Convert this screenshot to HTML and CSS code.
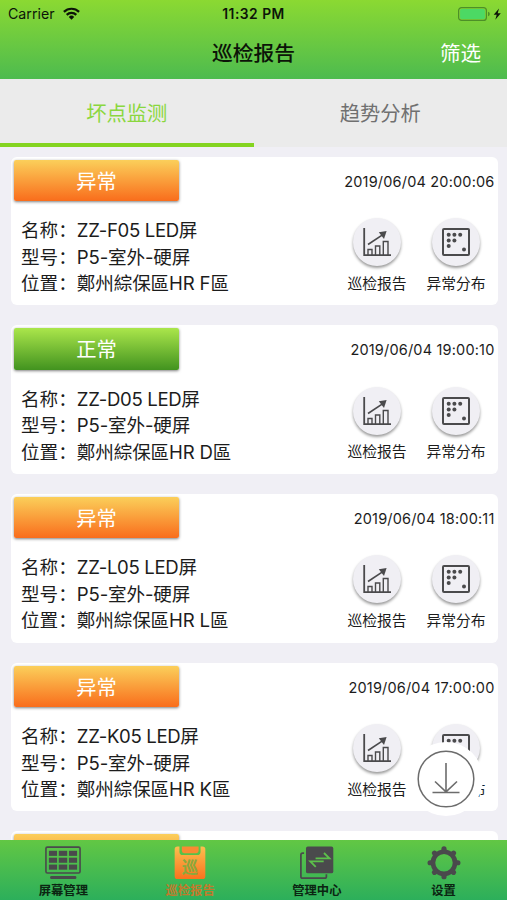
FILE: index.html
```html
<!DOCTYPE html>
<html lang="zh-CN">
<head>
    <meta charset="UTF-8">
    <meta name="viewport" content="width=device-width, initial-scale=1.0">
    <title>巡检报告</title>
    <link rel="stylesheet" href="styles.css">
</head>
<body>
    <!-- shared icons -->
    <svg class="sprite">
        <symbol id="icon-chart" viewBox="0 0 28 28">
            <path d="M1.2 0V27.2H28" fill="none" stroke="#4a4a4c" stroke-width="1.8"/>
            <path d="M5 27V21.5H9V27M12.5 27V18H16.8V27M20.3 27V13.5H25V27" fill="none" stroke="#4a4a4c" stroke-width="1.4"/>
            <path d="M5 16.5L19.500 6.800" fill="none" stroke="#4a4a4c" stroke-width="1.6"/>
            <path d="M15.800 4.300L23.600 3L21 10.900Z" fill="#4a4a4c"/>
        </symbol>
        <symbol id="icon-dots" viewBox="0 0 28 28">
            <rect x="1" y="1" width="26" height="26" rx="1" fill="none" stroke="#4a4a4c" stroke-width="2"/>
            <g fill="#4a4a4c">
                <circle cx="6.700" cy="6.700" r="2"/>
                <circle cx="12.400" cy="6.700" r="2"/>
                <circle cx="18.200" cy="6.700" r="2"/>
                <circle cx="6.700" cy="12.400" r="2"/>
                <circle cx="12.400" cy="12.400" r="2"/>
                <circle cx="6.700" cy="18" r="2"/>
                <circle cx="22" cy="21.600" r="2"/>
            </g>
        </symbol>
    </svg>

    <div class="app">
        <div class="header">
            <div class="status-bar">
                <div class="carrier">
                    <span>Carrier</span>
                    <svg class="wifi" viewBox="0 0 17 13">
                        <g fill="none" stroke="#0c1408" stroke-width="2.2">
                            <path d="M0.900 4.900A10.800 10.800 0 0 1 16.100 4.900"/>
                            <path d="M3.700 7.900A6.800 6.800 0 0 1 13.300 7.900"/>
                        </g>
                        <path d="M5.800 9.900A3.900 3.900 0 0 1 11.200 9.900L8.500 12.700Z" fill="#0c1408"/>
                    </svg>
                </div>
                <div class="time">11:32 PM</div>
                <div class="battery">
                    <svg viewBox="0 0 44 14">
                        <rect x="0.600" y="0.600" width="27.800" height="12.800" rx="3" fill="none" stroke="#4d8f28" stroke-width="1.2"/>
                        <rect x="2.100" y="2.100" width="24.800" height="9.800" rx="1.600" fill="#4cd964"/>
                        <path d="M30 4.800Q31.800 5.300 31.800 7T30 9.200Z" fill="#4d8f28"/>
                        <path d="M41 1.500L35.700 7.800H38.700L37.300 12.800L42.800 6.300H39.700Z" fill="#0c1408"/>
                    </svg>
                </div>
            </div>
            <div class="nav">
                <div class="title">巡检报告</div>
                <div class="filter">筛选</div>
            </div>
        </div>

        <div class="tabs">
            <div class="tab active">坏点监测</div>
            <div class="tab">趋势分析</div>
        </div>

        <div class="list">
            <div class="card">
                <div class="card-top">
                    <div class="badge error">异常</div>
                    <div class="date">2019/06/04 20:00:06</div>
                </div>
                <div class="card-body">
                    <div class="info">
                        <div>名称：<span class="name">ZZ-F05 LED屏</span></div>
                        <div>型号：<span>P5-室外-硬屏</span></div>
                        <div>位置：<span>鄭州綜保區HR F區</span></div>
                    </div>
                    <div class="actions">
                        <div class="action">
                            <div class="round"><svg><use href="#icon-chart"/></svg></div>
                            <div>巡检报告</div>
                        </div>
                        <div class="action">
                            <div class="round"><svg><use href="#icon-dots"/></svg></div>
                            <div>异常分布</div>
                        </div>
                    </div>
                </div>
            </div>

            <div class="card">
                <div class="card-top">
                    <div class="badge normal">正常</div>
                    <div class="date">2019/06/04 19:00:10</div>
                </div>
                <div class="card-body">
                    <div class="info">
                        <div>名称：<span class="name">ZZ-D05 LED屏</span></div>
                        <div>型号：<span>P5-室外-硬屏</span></div>
                        <div>位置：<span>鄭州綜保區HR D區</span></div>
                    </div>
                    <div class="actions">
                        <div class="action">
                            <div class="round"><svg><use href="#icon-chart"/></svg></div>
                            <div>巡检报告</div>
                        </div>
                        <div class="action">
                            <div class="round"><svg><use href="#icon-dots"/></svg></div>
                            <div>异常分布</div>
                        </div>
                    </div>
                </div>
            </div>

            <div class="card">
                <div class="card-top">
                    <div class="badge error">异常</div>
                    <div class="date">2019/06/04 18:00:11</div>
                </div>
                <div class="card-body">
                    <div class="info">
                        <div>名称：<span class="name">ZZ-L05 LED屏</span></div>
                        <div>型号：<span>P5-室外-硬屏</span></div>
                        <div>位置：<span>鄭州綜保區HR L區</span></div>
                    </div>
                    <div class="actions">
                        <div class="action">
                            <div class="round"><svg><use href="#icon-chart"/></svg></div>
                            <div>巡检报告</div>
                        </div>
                        <div class="action">
                            <div class="round"><svg><use href="#icon-dots"/></svg></div>
                            <div>异常分布</div>
                        </div>
                    </div>
                </div>
            </div>

            <div class="card">
                <div class="card-top">
                    <div class="badge error">异常</div>
                    <div class="date">2019/06/04 17:00:00</div>
                </div>
                <div class="card-body">
                    <div class="info">
                        <div>名称：<span class="name">ZZ-K05 LED屏</span></div>
                        <div>型号：<span>P5-室外-硬屏</span></div>
                        <div>位置：<span>鄭州綜保區HR K區</span></div>
                    </div>
                    <div class="actions">
                        <div class="action">
                            <div class="round"><svg><use href="#icon-chart"/></svg></div>
                            <div>巡检报告</div>
                        </div>
                        <div class="action">
                            <div class="round"><svg><use href="#icon-dots"/></svg></div>
                            <div>异常分布</div>
                        </div>
                    </div>
                </div>
            </div>

            <div class="card">
                <div class="card-top">
                    <div class="badge error"></div>
                </div>
            </div>
        </div>

        <div class="download">
            <svg viewBox="0 0 74 74">
                <circle cx="37" cy="37" r="27.800" fill="none" stroke="#6c6c6c" stroke-width="1.5"/>
                <path d="M37 21V49.500M26 39.500L37 49.800L48 39.500M23.500 50.500H50.500" fill="none" stroke="#6c6c6c" stroke-width="1.6"/>
            </svg>
        </div>

        <div class="tab-bar">
            <div class="tab-item">
                <svg viewBox="0 0 38 36">
                    <rect x="1.200" y="1.200" width="35.600" height="27" rx="1.500" fill="none" stroke="#4a4a4c" stroke-width="1.700"/>
                    <g fill="#4a4a4c">
                        <rect x="4.300" y="5" width="8.500" height="5.300"/>
                        <rect x="14.600" y="5" width="8.800" height="5.300"/>
                        <rect x="25.200" y="5" width="8.500" height="5.300"/>
                        <rect x="4.300" y="12.200" width="8.500" height="5.300"/>
                        <rect x="14.600" y="12.200" width="8.800" height="5.300"/>
                        <rect x="25.200" y="12.200" width="8.500" height="5.300"/>
                        <rect x="4.300" y="19.400" width="8.500" height="5.300"/>
                        <rect x="14.600" y="19.400" width="8.800" height="5.300"/>
                        <rect x="25.200" y="19.400" width="8.500" height="5.300"/>
                        <rect x="5.500" y="31.300" width="27.500" height="3.200" rx="1.500"/>
                    </g>
                </svg>
                <span>屏幕管理</span>
            </div>
            <div class="tab-item current">
                <svg viewBox="0 0 38 36">
                    <defs>
                        <linearGradient id="orange" gradientUnits="userSpaceOnUse" x1="0" y1="0" x2="0" y2="36">
                            <stop offset="0" stop-color="#fcc04f"/>
                            <stop offset="1" stop-color="#f96f1d"/>
                        </linearGradient>
                    </defs>
                    <path d="M3.500 0.500H8V6Q8 9.500 11.500 9.500H26.500Q30 9.500 30 6V0.500H32Q35 0.500 35 3.500V31.500Q35 34.500 32 34.500H6Q3 34.500 3 31.500V3.500Q3 0.500 6 0.500Z" fill="url(#orange)"/>
                    <path d="M10.500 0.500H28V5Q28 7.500 25.500 7.500H13Q10.500 7.500 10.500 5Z" fill="#f98a32"/>
                    <text class="icon-text" x="19" y="28" text-anchor="middle">巡</text>
                </svg>
                <span>巡检报告</span>
            </div>
            <div class="tab-item">
                <svg viewBox="0 0 38 36">
                    <path d="M5.500 7.500H4Q2.200 7.500 2.200 9.300V31.800Q2.200 33.600 4 33.600H27Q28.800 33.600 28.800 31.800V29.500" fill="none" stroke="#4a4a4c" stroke-width="1.800"/>
                    <rect x="7.500" y="0.500" width="28.500" height="28" rx="2" fill="#4a4a4c"/>
                    <path d="M17.500 13H32L26.300 7.300M26 16H12L17.700 21.700" fill="none" stroke="#5cc04b" stroke-width="1.900"/>
                </svg>
                <span>管理中心</span>
            </div>
            <div class="tab-item">
                <svg viewBox="0 0 38 36">
                    <circle cx="19" cy="17.500" r="11.500" fill="none" stroke="#4a4a4c" stroke-width="4.800"/>
                    <g fill="none" stroke="#4a4a4c" stroke-width="5.400" stroke-linecap="round">
                        <path d="M19 3V5M19 30V32M4.500 17.500H6.500M31.500 17.500H33.500"/>
                        <path d="M9 7.500L10.300 8.800M27.700 26.200L29 27.500M29 7.500L27.700 8.800M10.300 26.200L9 27.500"/>
                    </g>
                </svg>
                <span>设置</span>
            </div>
        </div>
    </div>
</body>
</html>
```
FILE: styles.css
```css
* {
    box-sizing: border-box;
}
body {
    margin: 0;
    font-family: Inter, "Noto Sans CJK SC", sans-serif;
    color: #1c1c1c;
    background-color: #f0eff5;
    overflow: hidden;
}
svg {
    display: block;
}
.sprite {
    display: none;
}
.app {
    position: relative;
    display: flex;
    flex-direction: column;
    width: 507px;
    height: 900px;
}

/* header */
.header {
    flex: none;
    height: 79px;
    background: linear-gradient(#8bd932, #4dbb4f);
}
.status-bar {
    display: grid;
    grid-template-columns: 1fr auto 1fr;
    align-items: center;
    height: 27px;
    padding: 0 5px 0 8px;
    color: #0c1408;
}
.carrier {
    display: flex;
    align-items: center;
    gap: 8px;
    font-size: 14.200px;
}
.wifi {
    width: 17px;
    height: 13px;
}
.time {
    margin-right: 3px;
    font-size: 13.800px;
    font-weight: 600;
    letter-spacing: 0.500px;
}
.battery {
    justify-self: end;
}
.battery svg {
    width: 44px;
    height: 14px;
}
.nav {
    display: grid;
    grid-template-columns: 1fr auto 1fr;
    align-items: center;
    height: 50px;
    padding-right: 26px;
    padding-left: 26px;
    font-size: 20.500px;
}
.title {
    grid-column: 2;
    font-size: 20.800px;
    font-weight: 500;
    color: #0c1408;
}
.filter {
    justify-self: end;
    color: #fff;
}

/* tabs */
.tabs {
    flex: none;
    display: flex;
    height: 68px;
    background-color: #ebebeb;
}
.tab {
    flex: 1;
    display: flex;
    align-items: center;
    justify-content: center;
    border-bottom: 4px solid transparent;
    padding-top: 2px;
    font-size: 20.300px;
    color: #707070;
}
.tab.active {
    color: #8ad73e;
    border-bottom-color: #84d420;
}

/* cards */
.list {
    flex: 1;
    min-height: 0;
    overflow: hidden;
    display: flex;
    flex-direction: column;
    gap: 20px;
    padding: 9.500px 9.500px 0 10.500px;
}
.card {
    flex: none;
    height: 148.700px;
    padding: 3px 3px 0 3.500px;
    border-radius: 6px;
    background-color: #fff;
}
.card-top {
    display: flex;
    justify-content: space-between;
    align-items: center;
}
.badge {
    width: 165px;
    height: 41.500px;
    line-height: 44px;
    border-radius: 2px;
    box-shadow: 0 1px 3px rgba(0, 0, 0, 0.5);
    font-size: 20.300px;
    text-align: center;
    color: #fff;
}
.error {
    background: linear-gradient(#fbcf5a, #f96d1c);
}
.normal {
    background: linear-gradient(#abe64b, #42931f);
}
.date {
    padding-top: 2px;
    font-size: 14.500px;
    letter-spacing: 0.180px;
}
.card-body {
    display: flex;
    justify-content: space-between;
}
.info {
    padding: 16px 0 0 7px;
    font-size: 18.600px;
    line-height: 26.500px;
    white-space: nowrap;
}
.info span {
    letter-spacing: -0.150px;
}
.info .name {
    letter-spacing: -0.350px;
}
.actions {
    display: flex;
    gap: 19px;
    padding: 17px 8.500px 0 0;
}
.action {
    display: flex;
    flex-direction: column;
    align-items: center;
    gap: 6.500px;
    font-size: 14.800px;
    line-height: 22px;
    width: 60px;
    white-space: nowrap;
}
.round {
    display: flex;
    align-items: center;
    justify-content: center;
    width: 48px;
    height: 48px;
    border-radius: 50%;
    background-color: #f0eff4;
    box-shadow: 0 2px 3px rgba(0, 0, 0, 0.4);
}
.round svg {
    width: 28px;
    height: 28px;
}

/* floating button over the list */
.download {
    position: absolute;
    right: 24px;
    bottom: 84px;
    width: 74px;
    height: 74px;
    border-radius: 50%;
    background-color: #fff;
}

/* bottom bar */
.tab-bar {
    flex: none;
    display: flex;
    height: 60px;
    background: linear-gradient(#62c744, #2caf5b);
}
.tab-item {
    flex: 1;
    display: flex;
    flex-direction: column;
    align-items: center;
    gap: 2px;
    padding-top: 5.500px;
    font-size: 12.300px;
    font-weight: 700;
    line-height: 18px;
    color: #0b2512;
}
.tab-item svg {
    width: 38px;
    height: 36px;
}
.current {
    color: #c27a2c;
}
.icon-text {
    font-size: 17px;
    font-weight: 700;
    fill: #8aa83c;
}
```
